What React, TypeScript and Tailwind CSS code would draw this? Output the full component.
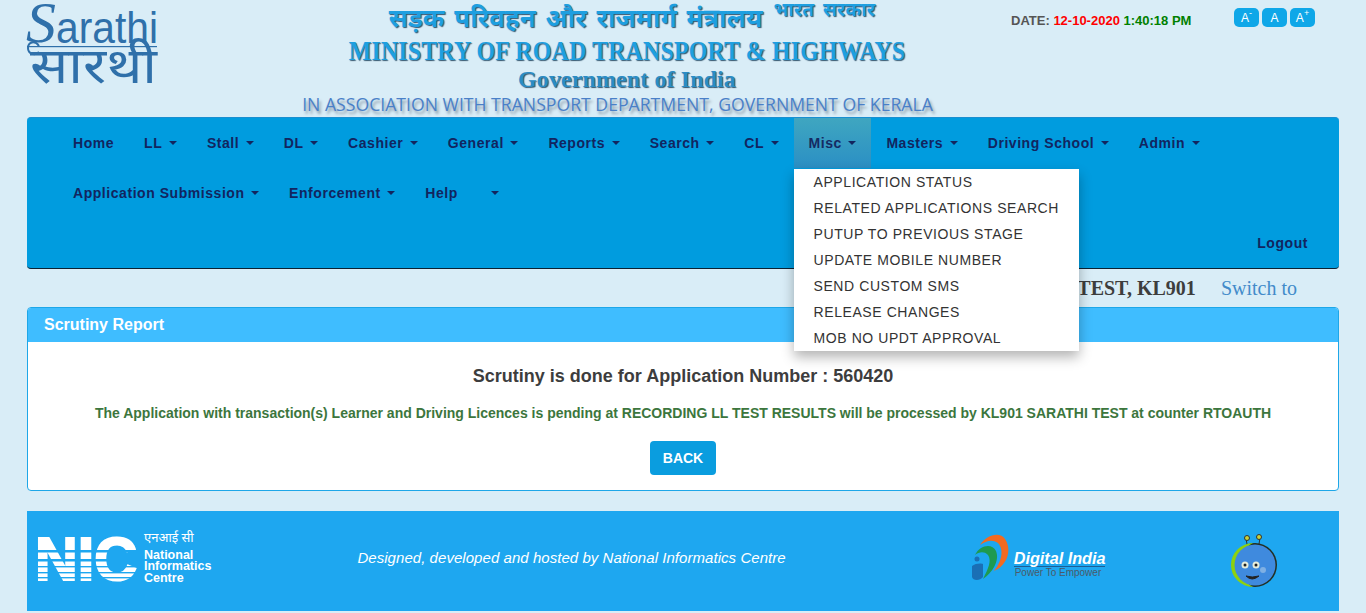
import React from 'react';

const row1 = ['Home', 'LL', 'Stall', 'DL', 'Cashier', 'General', 'Reports', 'Search', 'CL', 'Misc', 'Masters', 'Driving School', 'Admin'];
const row2 = ['Application Submission', 'Enforcement', 'Help'];
const miscItems = [
  'APPLICATION STATUS',
  'RELATED APPLICATIONS SEARCH',
  'PUTUP TO PREVIOUS STAGE',
  'UPDATE MOBILE NUMBER',
  'SEND CUSTOM SMS',
  'RELEASE CHANGES',
  'MOB NO UPDT APPROVAL',
];

const NavItem = ({ label }: { label: string }) => {
  const active = label === 'Misc';
  return (
    <div className="relative">
      <a className={`flex h-[50px] items-center px-[15px] text-[14px] font-bold tracking-[0.55px] whitespace-nowrap ${active ? 'bg-gradient-to-b from-[#3fa6c0] to-[#2b8fc4] text-[#152a63]' : 'text-[#12255f]'}`}>
        {label}
        {label !== 'Home' && (
          <span className={`inline-block h-0 w-0 border-x-[4px] border-t-[4px] border-x-transparent border-t-[#12255f] ${label === 'Help' ? 'ml-[33px]' : 'ml-[6.55px]'}`} />
        )}
      </a>
      {active && (
        <ul className="absolute left-0 top-[51px] z-20 w-[285px] bg-white shadow-[0_6px_12px_rgba(0,0,0,0.3)]">
          {miscItems.map((item) => (
            <li key={item} className="flex h-[26px] items-center pl-[20px] text-[14px] tracking-[0.58px] whitespace-nowrap text-[#333333]">{item}</li>
          ))}
        </ul>
      )}
    </div>
  );
};

const SarathiLogo = () => (
  <svg width="135" height="90" viewBox="0 0 135 90" fill="#2f70aa" className="shrink-0 overflow-visible">
    <text x="-1" y="42" fontFamily="Liberation Serif, serif" fontStyle="italic" fontSize="58" textLength="30" lengthAdjust="spacingAndGlyphs">S</text>
    <text x="29" y="43" fontFamily="Liberation Sans, sans-serif" fontSize="44" textLength="102" lengthAdjust="spacingAndGlyphs">arathi</text>
    <path d="M12 46C8 40 1 42 1 48C1 54 8 56 12 52" fill="none" stroke="#2f70aa" strokeWidth="2" />
    <rect x="0" y="46" width="130" height="1.2" />
    <text x="3" y="83" fontFamily="Noto Sans Devanagari, Noto Sans, sans-serif" fontSize="50" textLength="127" lengthAdjust="spacingAndGlyphs">सारथी</text>
  </svg>
);

const NicLogo = () => (
  <svg width="100" height="46" viewBox="0 0 100 46" className="shrink-0 overflow-visible">
    <text x="-3" y="45" fontFamily="Liberation Sans, sans-serif" fontWeight="700" fontSize="61" fill="#ffffff" stroke="#ffffff" strokeWidth="2" textLength="102" lengthAdjust="spacingAndGlyphs">NIC</text>
    {[15, 24, 31, 37, 42].map((y, i) => (
      <rect key={y} x="-2" y={y} width="104" height={i < 2 ? 2.5 : 1.4} fill="#1ea7f0" />
    ))}
  </svg>
);

const DigitalIndia = () => (
  <div className="flex items-start gap-[4px]">
    <svg width="40" height="50" viewBox="0 0 40 50" className="shrink-0">
      <path d="M10 12C16 2 30 -2 35 6C42 16 38 32 24 38C32 28 34 16 28 10C22 6 16 8 10 12Z" fill="#f26a21" />
      <path d="M5 22C10 12 22 10 26 18C30 28 22 40 13 46C18 36 22 28 18 22C14 18 9 19 5 22Z" fill="#1e9a50" />
      <circle cx="7" cy="26" r="2.5" fill="#1a6fb5" />
      <path d="M2 33C5 30 12 30 13 31L13 44C10 48 3 48 2 44Z" fill="#1a6fb5" />
    </svg>
    <div className="mt-[17px] flex flex-col">
      <span className="border-b border-[#1d5f96] text-[16.2px] leading-[16px] font-bold text-white italic">Digital India</span>
      <span className="ml-[1px] text-[10px] leading-[12px] text-[#4a5a68]">Power To Empower</span>
    </div>
  </div>
);

const Mascot = () => (
  <svg width="50" height="56" viewBox="0 0 50 56" className="shrink-0">
    <path d="M16 10L15 5M28 10L29 4M13 12Q22 8 31 12" stroke="#333" strokeWidth="1" fill="none" />
    <circle cx="16" cy="4" r="2.5" fill="#c7d23a" stroke="#333" />
    <circle cx="28" cy="3" r="2.5" fill="#c7d23a" stroke="#333" />
    <circle cx="24" cy="31" r="22" fill="#232f22" />
    <path d="M22 9A22 22 0 0 0 22 53A25 25 0 0 1 22 9Z" fill="#8ed10f" />
    <circle cx="24" cy="31" r="20.5" fill="#3f8ade" />
    <circle cx="14" cy="31" r="3.5" fill="#e6eddc" />
    <circle cx="25" cy="31" r="3.5" fill="#e6eddc" />
    <circle cx="14" cy="31" r="1.5" fill="#222" />
    <circle cx="25" cy="31" r="1.5" fill="#222" />
    <path d="M15 42Q21 48 28 42Q21 44 15 42Z" fill="#222" stroke="#222" />
    <circle cx="32" cy="36" r="3" fill="#7fb0e4" />
  </svg>
);

const App: React.FC = () => {
  return (
    <div className="h-[613px] overflow-hidden bg-[#d9edf7] font-['Liberation_Sans',sans-serif]">
      <div className="px-[27px]">
        {/* Header */}
        <header className="flex h-[117px] items-start">
          <SarathiLogo />
          <div className="flex w-[849px] flex-col items-center pl-[81px] whitespace-nowrap">
            <div className="ml-[10px] flex h-[37px] items-start font-['Noto_Sans_Devanagari','Noto_Sans',sans-serif] font-bold text-[#1e9fe0] [text-shadow:1px_1px_1px_#33566f]">
              <span className="mt-[3px] text-[26px] leading-[36px] [word-spacing:3px]">सड़क परिवहन और राजमार्ग मंत्रालय</span>
              <span className="mt-[1px] ml-[11px] text-[19px] leading-[22px] [word-spacing:4px]">भारत सरकार</span>
            </div>
            <div className="scale-y-[1.12] font-['Liberation_Serif',serif] text-[24px] leading-[28px] font-bold tracking-[0.1px] text-[#1e9fe0] [text-shadow:1px_1px_1px_#33566f]">MINISTRY OF ROAD TRANSPORT &amp; HIGHWAYS</div>
            <div className="mt-[1px] font-['Liberation_Serif',serif] text-[24px] leading-[26px] font-bold tracking-[0.1px] text-[#2b8cc4] [text-shadow:1px_1px_1px_#33566f]">Government of India</div>
            <div className="mr-[19px] font-['Open_Sans',sans-serif] text-[17.65px] leading-[24px] font-medium text-[#4a80c8] [text-shadow:2px_3px_3px_#8a9aa8]">IN ASSOCIATION WITH TRANSPORT DEPARTMENT, GOVERNMENT OF KERALA</div>
          </div>
          <div className="mt-[13px] flex w-[328px] shrink-0 items-start pr-[23px] text-[13px] font-bold">
            <div className="w-[223px] leading-[16px] text-[#555555]">
              DATE: <span className="text-[#ff0000]">12-10-2020</span> <span className="text-[#008000]">1:40:18 PM</span>
            </div>
            <div className="-mt-[5px] flex gap-[3px]">
              {['A', 'A', 'A'].map((a, i) => (
                <button key={i} className="flex h-[19px] w-[25px] items-center justify-center rounded-[5px] bg-[#0fa7e8] text-[12px] font-normal text-white">
                  {a}{i === 0 && <sup className="text-[9px]">-</sup>}{i === 2 && <sup className="text-[9px]">+</sup>}
                </button>
              ))}
            </div>
          </div>
        </header>

        {/* Navbar */}
        <nav className="relative flex h-[152px] flex-col rounded-[4px] border-t border-b border-t-[#1a8fd0] border-b-[#0b2233] bg-[#009cdf] pl-[31px]">
          <div className="flex">{row1.map((label) => <NavItem key={label} label={label} />)}</div>
          <div className="flex">{row2.map((label) => <NavItem key={label} label={label} />)}</div>
          <div className="mt-auto mb-[14px] flex justify-end pr-[31px] text-[14px] font-bold tracking-[0.55px] text-[#12255f]">Logout</div>
        </nav>

        {/* User row */}
        <div className="flex h-[38px] items-center justify-end pr-[42px] font-['Liberation_Serif',serif] text-[20px]">
          <span className="font-bold text-[#3d3d3d]">TEST, KL901</span>
          <span className="ml-[25px] text-[#428bca]">Switch to</span>
        </div>

        {/* Panel */}
        <section className="h-[184px] overflow-hidden rounded-[4px] border border-[#1ea7e8] bg-white">
          <div className="flex h-[34px] items-center bg-[#3fbdff] pl-[16px] text-[16px] font-bold text-white">Scrutiny Report</div>
          <div className="flex flex-col items-center">
            <h3 className="mt-[24px] text-[18px] leading-[20px] font-bold text-[#3d3d3d]">Scrutiny is done for Application Number : 560420</h3>
            <p className="mt-[18px] text-[14px] leading-[19px] font-bold text-[#3c763d]">The Application with transaction(s) Learner and Driving Licences is pending at RECORDING LL TEST RESULTS will be processed by KL901 SARATHI TEST at counter RTOAUTH</p>
            <button className="mt-[18px] h-[34px] w-[66px] rounded-[4px] bg-[#0a9ddf] text-[14px] font-bold text-white">BACK</button>
          </div>
        </section>

        {/* Footer */}
        <footer className="mt-[20px] flex h-[100px] items-center bg-[#1ea7f0] pb-[6px] text-white">
          <div className="ml-[11px] flex items-center gap-[6px]">
            <NicLogo />
            <div className="flex flex-col text-[12.5px] leading-[11.5px] font-bold">
              <span className="mb-[5px] font-['Noto_Sans_Devanagari','Noto_Sans',sans-serif] text-[13px] leading-[13px] font-normal">एनआई सी</span>
              <span>National</span>
              <span>Informatics</span>
              <span>Centre</span>
            </div>
          </div>
          <p className="ml-[146px] text-[15px] tracking-[0.05px] italic">Designed, developed and hosted by National Informatics Centre</p>
          <div className="ml-[184px]"><DigitalIndia /></div>
          <div className="mt-[8px] ml-[126px]"><Mascot /></div>
        </footer>
      </div>
    </div>
  );
};

export default App;
